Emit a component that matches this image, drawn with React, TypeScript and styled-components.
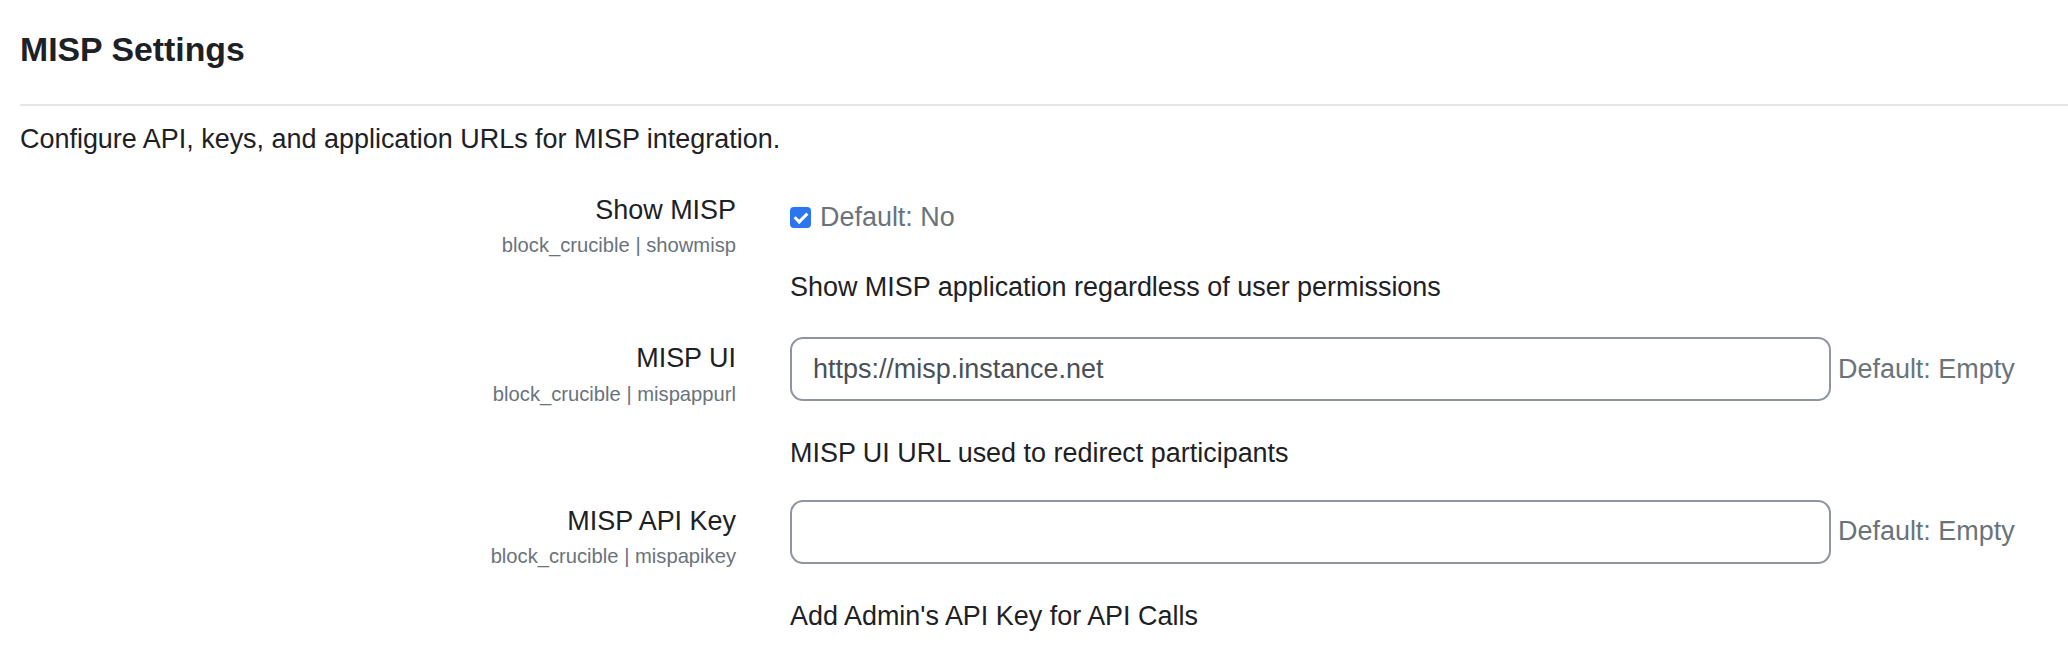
import styled, {createGlobalStyle} from "styled-components";

const GlobalStyle = createGlobalStyle`
  body {
    margin: 0;
    background: #ffffff;
    color: #1d2125;
    font-family: "Liberation Sans", Arial, sans-serif;
    font-size: 26.95px;
    line-height: 39.4px;
  }
`

const Page = styled.main`
  padding: 29px 0 0 20px;
`

const Title = styled.h3`
  margin: 0;
  font-size: 33.8px;
  font-weight: bold;
  line-height: 40.6px;
`

const Divider = styled.hr`
  margin: 34px 0 0 0;
  border: none;
  border-top: 2px solid #e6e6e6;
  height: 0;
`

const Intro = styled.p`
  margin: 14px 0 0 0;
`

const SettingsList = styled.div`
  margin-top: 29px;
`

const SettingRow = styled.div<{ $gap: number }>`
  display: grid;
  grid-template-columns: 716px 1fr;
  column-gap: 54px;
  margin-bottom: ${p => p.$gap}px;
`

const LabelCol = styled.div`
  padding-top: 3px;
  text-align: right;
`

const Label = styled.label`
  display: block;
`

const ShortName = styled.div`
  font-size: 20.2px;
  line-height: 30px;
  color: #6a737b;
`

const SettingCol = styled.div`
  display: flex;
  flex-direction: column;
`

const ControlLine = styled.div<{ $offset: number; $height?: number }>`
  display: flex;
  align-items: center;
  margin-top: ${p => p.$offset}px;
  ${p => p.$height ? `height: ${p.$height}px;` : ""}
`

const TextInput = styled.input`
  box-sizing: border-box;
  width: 1041px;
  height: 64px;
  padding: 0 21px;
  border: 2px solid #8f959e;
  border-radius: 13px;
  background: #ffffff;
  color: #495057;
  font-family: inherit;
  font-size: 26.95px;
  outline: none;
`

const CheckBox = styled.input`
  appearance: none;
  position: relative;
  flex: none;
  width: 21px;
  height: 21px;
  margin: 0;
  border-radius: 4px;
  background: #2b76ef;

  &::after {
    content: "";
    position: absolute;
    left: 7px;
    top: 3px;
    width: 5px;
    height: 10px;
    border-right: 3px solid #ffffff;
    border-bottom: 3px solid #ffffff;
    transform: rotate(45deg);
  }
`

const DefaultInfo = styled.span<{ $gap: number }>`
  margin-left: ${p => p.$gap}px;
  color: #6a737b;
  white-space: nowrap;
`

const Description = styled.div<{ $offset: number }>`
  margin-top: ${p => p.$offset}px;
`

interface TextSetting {
    label: string;
    name: string;
    value: string;
    description: string;
}

const textSettings: TextSetting[] = [
    {
        label: "MISP UI",
        name: "mispappurl",
        value: "https://misp.instance.net",
        description: "MISP UI URL used to redirect participants",
    },
    {
        label: "MISP API Key",
        name: "mispapikey",
        value: "",
        description: "Add Admin's API Key for API Calls",
    },
]

export default function App() {
    return (
        <>
            <GlobalStyle/>
            <Page>
                <Title>MISP Settings</Title>
                <Divider/>
                <Intro>Configure API, keys, and application URLs for MISP integration.</Intro>

                <SettingsList>
                    <SettingRow $gap={29}>
                        <LabelCol>
                            <Label htmlFor="id_showmisp">Show MISP</Label>
                            <ShortName>block_crucible | showmisp</ShortName>
                        </LabelCol>
                        <SettingCol>
                            <ControlLine $offset={9} $height={41}>
                                <CheckBox id="id_showmisp" type="checkbox" defaultChecked/>
                                <DefaultInfo $gap={9}>Default: No</DefaultInfo>
                            </ControlLine>
                            <Description $offset={30}>
                                Show MISP application regardless of user permissions
                            </Description>
                        </SettingCol>
                    </SettingRow>

                    {textSettings.map(setting => (
                        <SettingRow key={setting.name} $gap={25}>
                            <LabelCol>
                                <Label htmlFor={"id_" + setting.name}>{setting.label}</Label>
                                <ShortName>block_crucible | {setting.name}</ShortName>
                            </LabelCol>
                            <SettingCol>
                                <ControlLine $offset={1}>
                                    <TextInput
                                        id={"id_" + setting.name}
                                        type="text"
                                        defaultValue={setting.value}
                                    />
                                    <DefaultInfo $gap={7}>Default: Empty</DefaultInfo>
                                </ControlLine>
                                <Description $offset={33}>{setting.description}</Description>
                            </SettingCol>
                        </SettingRow>
                    ))}
                </SettingsList>
            </Page>
        </>
    )
}
